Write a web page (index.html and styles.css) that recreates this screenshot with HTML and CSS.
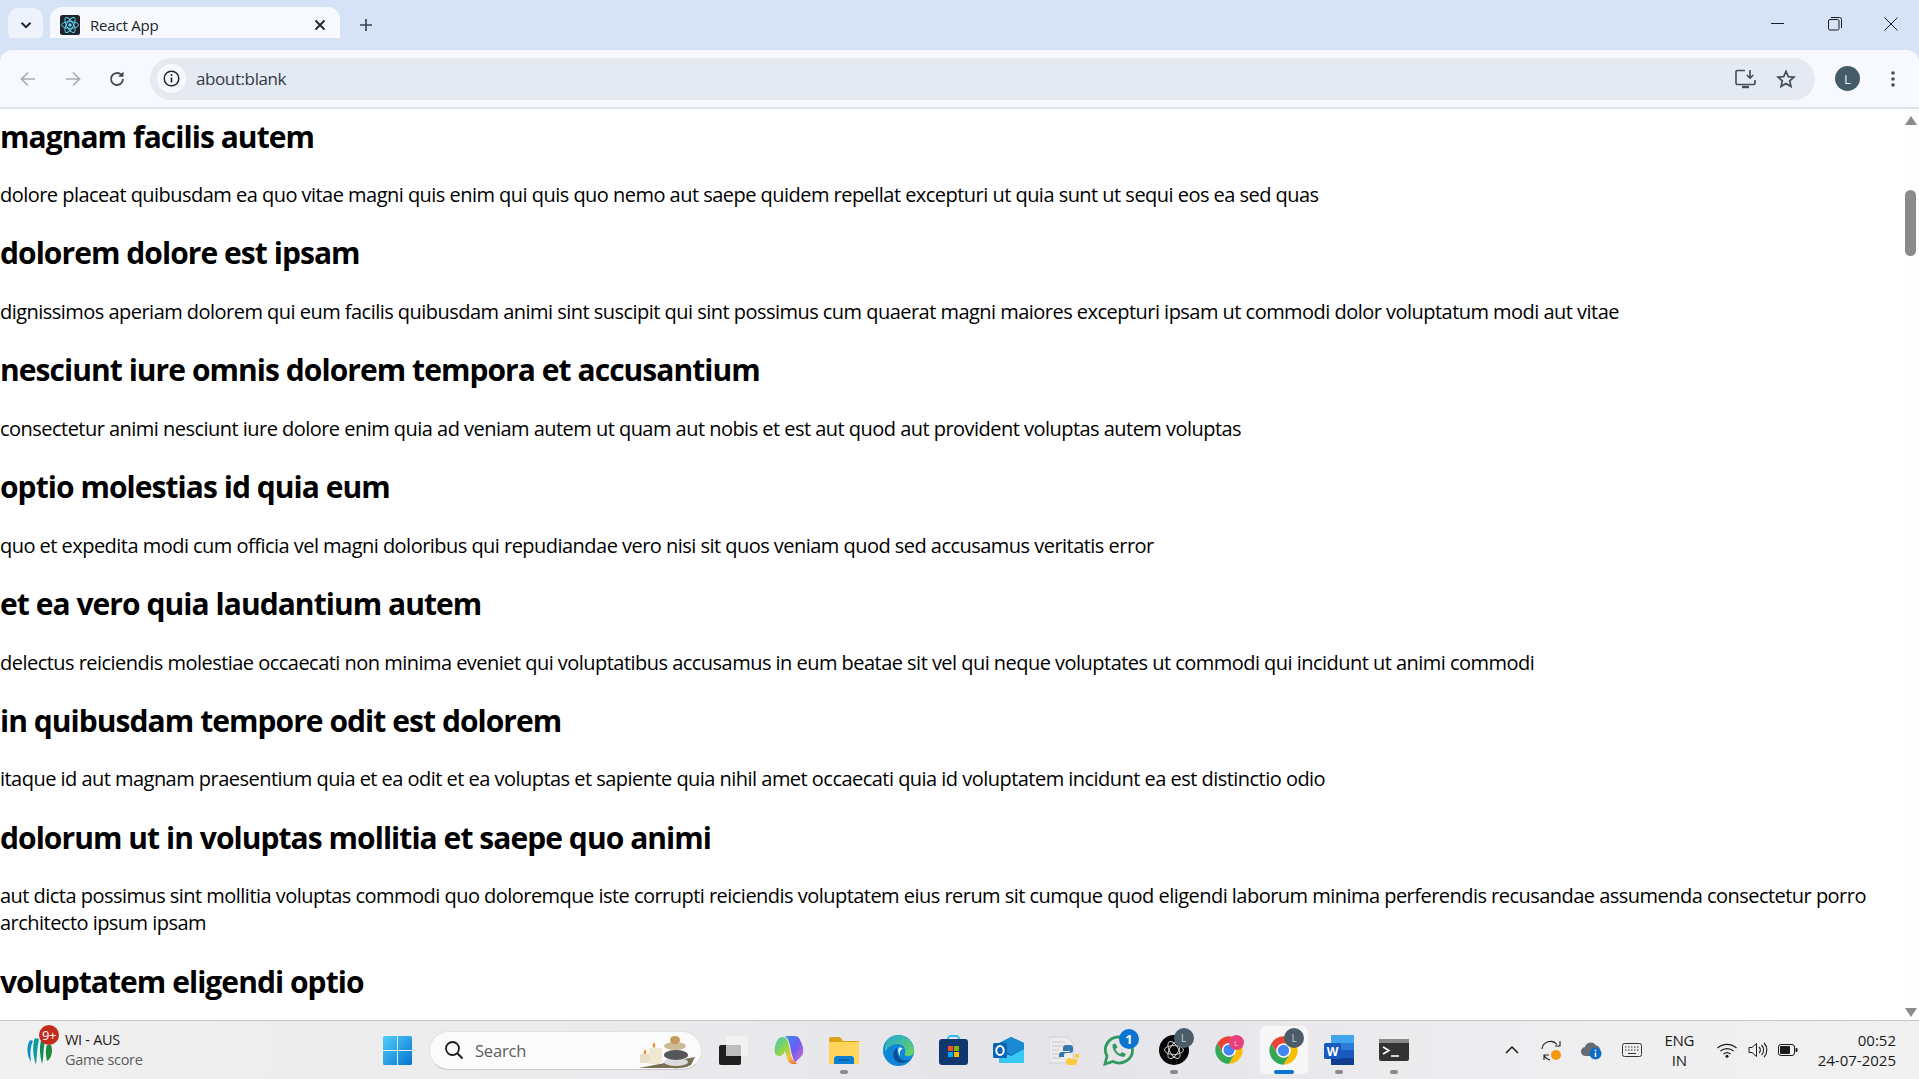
FILE: index.html
```html
<!DOCTYPE html>
<html lang="en">
<head>
<meta charset="utf-8">
<title>React App</title>
<link rel="stylesheet" href="styles.css">
</head>
<body>
<svg class="defs" width="0" height="0">
  <symbol id="chrome" viewBox="0 0 48 48">
    <path fill="#ea4335" d="M43 13H24A11 11 0 0 0 14.5 29.5L5 13A22 22 0 0 1 43 13Z"/>
    <path fill="#fbbc04" d="M43 13H24A11 11 0 0 1 33.5 29.5L24 46A22 22 0 0 0 43 13Z"/>
    <path fill="#34a853" d="M5 13L14.500 29.500A11 11 0 0 0 33.500 29.500L24 46A22 22 0 0 1 5 13Z"/>
    <circle cx="24" cy="24" r="11" fill="#fff"/>
    <circle cx="24" cy="24" r="8.800" fill="#4285f4"/>
  </symbol>
</svg>
<div class="window">
  <header class="tabstrip">
    <button class="tabsearch"><svg width="14" height="14" viewBox="0 0 14 14"><path d="M2.500 4.800L7 9.200L11.500 4.800" fill="none" stroke="#1f2430" stroke-width="2"/></svg></button>
    <div class="tab">
      <svg class="favicon" width="20" height="20" viewBox="0 0 20 20">
        <rect width="20" height="20" rx="2.500" fill="#20232a"/>
        <g fill="none" stroke="#61dafb" stroke-width=".9">
          <ellipse cx="10" cy="10" rx="8.500" ry="3.400"/>
          <ellipse cx="10" cy="10" rx="8.500" ry="3.400" transform="rotate(60 10 10)"/>
          <ellipse cx="10" cy="10" rx="8.500" ry="3.400" transform="rotate(120 10 10)"/>
        </g>
        <circle cx="10" cy="10" r="1.700" fill="#61dafb"/>
      </svg>
      <span class="tabtitle">React App</span>
      <svg class="tabclose" width="12" height="12" viewBox="0 0 12 12"><path d="M1.500 1.500L10.500 10.500M10.500 1.500L1.500 10.500" stroke="#1f2430" stroke-width="1.800"/></svg>
    </div>
    <svg class="newtab" width="14" height="14" viewBox="0 0 14 14"><path d="M7 1V13M1 7H13" stroke="#3c4454" stroke-width="1.700"/></svg>
    <div class="winctrls">
      <svg width="14" height="14" viewBox="0 0 14 14"><path d="M0 6.500H13" stroke="#1b1b1b" stroke-width="1"/></svg>
      <svg width="14" height="14" viewBox="0 0 14 14"><rect x=".5" y="2.500" width="10.500" height="10.500" rx="1.500" fill="none" stroke="#1b1b1b"/><path d="M3 .5H11.500A2 2 0 0 1 13.500 2.500V11" fill="none" stroke="#1b1b1b"/></svg>
      <svg width="14" height="14" viewBox="0 0 14 14"><path d="M.5 .5L13.500 13.500M13.500 .5L.5 13.500" stroke="#1b1b1b" stroke-width="1"/></svg>
    </div>
  </header>
  <nav class="toolbar">
    <svg class="navbtn" width="18" height="18" viewBox="0 0 18 18"><path d="M16 9H2.500M9 2.500L2.500 9L9 15.500" fill="none" stroke="#a9acb3" stroke-width="1.700"/></svg>
    <svg class="navbtn" width="18" height="18" viewBox="0 0 18 18"><path d="M2 9H15.500M9 2.500L15.500 9L9 15.500" fill="none" stroke="#a9acb3" stroke-width="1.700"/></svg>
    <svg class="navbtn" width="18" height="18" viewBox="0 0 18 18"><path d="M15 9A6 6 0 1 1 13.200 4.700" fill="none" stroke="#3f4654" stroke-width="1.800"/><path d="M15.500 1.500V6.800H10.200Z" fill="#3f4654"/></svg>
    <div class="omnibox">
      <span class="infobtn"><svg width="17" height="17" viewBox="0 0 17 17"><circle cx="8.500" cy="8.500" r="7.300" fill="none" stroke="#22262e" stroke-width="1.500"/><path d="M8.500 7.500V12.500" stroke="#22262e" stroke-width="1.700"/><circle cx="8.500" cy="5" r="1" fill="#22262e"/></svg></span>
      <span class="url">about:blank</span>
      <svg class="omniicon" width="21" height="20" viewBox="0 0 21 20"><path d="M10 1.500H2.500A1.500 1.500 0 0 0 1 3V14A1.500 1.500 0 0 0 2.500 15.500H18.500A1.500 1.500 0 0 0 20 14V11" fill="none" stroke="#464c58" stroke-width="1.600"/><path d="M7 18H14" stroke="#464c58" stroke-width="2.400"/><path d="M15 1V9M11.800 6L15 9.200L18.200 6" fill="none" stroke="#464c58" stroke-width="1.600"/></svg>
      <svg class="omniicon star" width="20" height="20" viewBox="0 0 20 20"><path d="M10 2.300L12.300 7.600L18 8.100L13.700 11.900L15 17.500L10 14.500L5 17.500L6.300 11.900L2 8.100L7.700 7.600Z" fill="none" stroke="#464c58" stroke-width="1.700"/></svg>
    </div>
    <span class="avatar">L</span>
    <svg class="kebab" width="6" height="18" viewBox="0 0 6 18"><circle cx="3" cy="3" r="1.800" fill="#464c58"/><circle cx="3" cy="9" r="1.800" fill="#464c58"/><circle cx="3" cy="15" r="1.800" fill="#464c58"/></svg>
  </nav>
  <main class="viewport">
    <article class="page">
      <h2>magnam facilis autem</h2>
      <p>dolore placeat quibusdam ea quo vitae magni quis enim qui quis quo nemo aut saepe quidem repellat excepturi ut quia sunt ut sequi eos ea sed quas</p>
      <h2>dolorem dolore est ipsam</h2>
      <p>dignissimos aperiam dolorem qui eum facilis quibusdam animi sint suscipit qui sint possimus cum quaerat magni maiores excepturi ipsam ut commodi dolor voluptatum modi aut vitae</p>
      <h2>nesciunt iure omnis dolorem tempora et accusantium</h2>
      <p>consectetur animi nesciunt iure dolore enim quia ad veniam autem ut quam aut nobis et est aut quod aut provident voluptas autem voluptas</p>
      <h2>optio molestias id quia eum</h2>
      <p>quo et expedita modi cum officia vel magni doloribus qui repudiandae vero nisi sit quos veniam quod sed accusamus veritatis error</p>
      <h2>et ea vero quia laudantium autem</h2>
      <p>delectus reiciendis molestiae occaecati non minima eveniet qui voluptatibus accusamus in eum beatae sit vel qui neque voluptates ut commodi qui incidunt ut animi commodi</p>
      <h2>in quibusdam tempore odit est dolorem</h2>
      <p>itaque id aut magnam praesentium quia et ea odit et ea voluptas et sapiente quia nihil amet occaecati quia id voluptatem incidunt ea est distinctio odio</p>
      <h2>dolorum ut in voluptas mollitia et saepe quo animi</h2>
      <p>aut dicta possimus sint mollitia voluptas commodi quo doloremque iste corrupti reiciendis voluptatem eius rerum sit cumque quod eligendi laborum minima perferendis recusandae assumenda consectetur porro architecto ipsum ipsam</p>
      <h2>voluptatem eligendi optio</h2>
    </article>
    <div class="scrollbar">
      <span class="arrow up"></span>
      <span class="thumb"></span>
      <span class="arrow down"></span>
    </div>
  </main>
  <footer class="taskbar">
    <div class="widget">
      <span class="widgeticon">
        <svg width="26" height="30" viewBox="0 0 26 30">
          <path d="M3 4C-1 11 0 20 4 26C3 18 3 11 6 5Z" fill="#0b8fc6"/>
          <path d="M8 2C5 10 6 20 9 29C10 20 10 11 12 3Z" fill="#0d9c9c"/>
          <path d="M14 4C12 12 13 20 15 28C17 22 16 12 18 6Z" fill="#138a5e"/>
          <path d="M20 9C18 14 19 20 20 25C25 22 26 14 24 9Z" fill="#1f8a3c"/>
        </svg>
        <span class="redbadge">9+</span>
      </span>
      <span class="widgettext"><b>WI - AUS</b><i>Game score</i></span>
    </div>
    <div class="apps">
      <span class="slot"><svg width="29" height="29" viewBox="0 0 29 29"><defs><linearGradient id="w" x1="0" y1="0" x2="1" y2="1"><stop offset="0" stop-color="#4fd0fb"/><stop offset="1" stop-color="#0673cf"/></linearGradient></defs><path fill="url(#w)" d="M0 1.500A1.500 1.500 0 0 1 1.500 0H14V14H0ZM15 0H27.500A1.500 1.500 0 0 1 29 1.500V14H15ZM0 15H14V29H1.500A1.500 1.500 0 0 1 0 27.500ZM15 15H29V27.500A1.500 1.500 0 0 1 27.500 29H15Z"/></svg></span>
      <div class="search">
        <svg width="20" height="20" viewBox="0 0 20 20"><circle cx="8.500" cy="8.500" r="6.500" fill="none" stroke="#1e1e1e" stroke-width="1.800"/><path d="M13.300 13.300L18.500 18.500" stroke="#1e1e1e" stroke-width="2"/></svg>
        <span class="searchtext">Search</span>
        <svg class="stones" width="60" height="34" viewBox="0 0 60 34">
          <path d="M0 33L56 22L52 30Q44 34 34 33Z" fill="#7b6f55"/>
          <rect x="1" y="19" width="13" height="9" rx="1" fill="#e9dfc6"/>
          <rect x="10" y="13" width="13" height="16" rx="1" fill="#f1e8d2"/>
          <path d="M6 14Q8 17 7 19H5Q4 17 6 14ZM15 7Q17 10 16 12.500H14Q13 10 15 7Z" fill="#ee8a2c"/>
          <ellipse cx="37" cy="27" rx="12" ry="4" fill="#dcdcdc"/>
          <ellipse cx="37" cy="20" rx="12" ry="5" fill="#55565a"/>
          <ellipse cx="36" cy="11" rx="11" ry="4" fill="#cdbb95"/>
          <ellipse cx="36" cy="5" rx="5" ry="4" fill="#c49a5e"/>
        </svg>
      </div>
      <span class="slot"><svg width="31" height="29" viewBox="0 0 31 29"><rect x="1" y="9" width="22" height="20" rx="2" fill="#1f1f1f"/><rect x="8" y="0" width="22" height="20" rx="2" fill="#f3f3f3" opacity=".85"/><rect x="8" y="9" width="15" height="11" fill="#bdbdbd"/></svg></span>
      <span class="slot"><svg width="30" height="28" viewBox="0 0 30 28"><defs><linearGradient id="c1" x1="0" y1="0" x2="1" y2="1"><stop offset="0" stop-color="#3f8ff0"/><stop offset=".5" stop-color="#6a5cf0"/><stop offset="1" stop-color="#e46ad0"/></linearGradient><linearGradient id="c2" x1="0" y1="0" x2="1" y2="1"><stop offset="0" stop-color="#3dc8c0"/><stop offset=".4" stop-color="#8bd64f"/><stop offset=".7" stop-color="#f7c23a"/><stop offset="1" stop-color="#f0503a"/></linearGradient></defs><path fill="url(#c2)" d="M9 1C4 1 2 6 1 11C0 16 1 20 5 20C8 20 10 18 11 15L13 22C14 26 16 28 20 28H24C20 27 18 23 17 19L14 6C13 3 12 1 9 1Z"/><path fill="url(#c1)" d="M11 0H21C23 0 25 1 26 4C28 8 30 12 29 17C28 21 24 23 21 27C19 23 18 19 17 15C16 9 15 3 11 0Z"/></svg></span>
      <span class="slot dot"><svg width="30" height="27" viewBox="0 0 30 27"><path d="M0 2A2 2 0 0 1 2 0H11L14 4H29A1 1 0 0 1 30 5V8H0Z" fill="#dca414"/><path d="M0 5H30V26A1 1 0 0 1 29 27H1A1 1 0 0 1 0 26Z" fill="#ffd55c"/><path d="M5 27V22A3 3 0 0 1 8 19H22A3 3 0 0 1 25 22V27Z" fill="#0a7fd4"/><path d="M10 23H20" stroke="#055a9e" stroke-width="1.500"/></svg></span>
      <span class="slot"><svg width="31" height="31" viewBox="0 0 31 31"><defs><linearGradient id="e1" x1="0" y1="0" x2="1" y2="1"><stop offset="0" stop-color="#1fa9d8"/><stop offset="1" stop-color="#6fd65a"/></linearGradient></defs><circle cx="15.500" cy="15.500" r="15.500" fill="#0f86d8"/><path d="M11 .8C20 -1.500 31 5 31 15.500C31 21 25 22.500 21.500 20C24 15 21 9 14.500 9C9 9 5 12 2 17C1 9 5 2 11 .8Z" fill="url(#e1)"/><path d="M14 13C10 15 9 21 12 25C15 29 22 29 26 25C21 26 18 25 16 22C14 19 14 16 14 13Z" fill="#0b4f94"/><path d="M16 12.500C14.500 15 15 19 17.500 21.500C16 18 17 14.500 20 13.500C19 12.800 17.500 12.300 16 12.500Z" fill="#e8f5fb"/></svg></span>
      <span class="slot"><svg width="29" height="30" viewBox="0 0 29 30"><path d="M9 6V3A3 3 0 0 1 12 1H17A3 3 0 0 1 20 3V6" fill="none" stroke="#2dbcee" stroke-width="1.800"/><rect y="4" width="29" height="26" rx="3" fill="#10386f"/><rect x="9" y="11" width="5" height="5" fill="#f25022"/><rect x="15" y="11" width="5" height="5" fill="#7fba00"/><rect x="9" y="17" width="5" height="5" fill="#00a4ef"/><rect x="15" y="17" width="5" height="5" fill="#ffb900"/></svg></span>
      <span class="slot"><svg width="31" height="26" viewBox="0 0 31 26"><path d="M6 6L18 0L31 6V24A2 2 0 0 1 29 26H8A2 2 0 0 1 6 24Z" fill="#0f6cbd"/><path d="M18 0L31 6V12L18 18L9 12V5Z" fill="#1a8ad4"/><path d="M6 14L18 19L31 12V24A2 2 0 0 1 29 26H8A2 2 0 0 1 6 24Z" fill="#38c9f3"/><rect y="6" width="14" height="15" rx="1.500" fill="#0a63b5"/><ellipse cx="7" cy="13.500" rx="3.700" ry="4.500" fill="none" stroke="#fff" stroke-width="2"/></svg></span>
      <span class="slot"><svg width="30" height="30" viewBox="0 0 30 30"><path d="M0 2H18L24 8V28H0Z" fill="#ececec" stroke="#cfcfcf"/><path d="M3 7H16M3 11H14M3 15H10M3 19H10M3 23H12" stroke="#c6c6c6"/><path d="M21 10H17A3 3 0 0 0 14 13V16H21V17H12A3 3 0 0 0 10 20V22H15V20A2 2 0 0 1 17 18H21A3 3 0 0 0 24 15V13A3 3 0 0 0 21 10Z" fill="#3776ab"/><path d="M21 30H25A3 3 0 0 0 28 27V24H22V23H29A1 1 0 0 0 30 21V19H26V21A2 2 0 0 1 24 23H20A3 3 0 0 0 17 26V27A3 3 0 0 0 21 30Z" fill="#ffcb3d"/></svg></span>
      <span class="slot"><span class="iconwrap"><svg width="31" height="31" viewBox="0 0 31 31"><path d="M2 29L4 21C-1 12 6 2 15.500 2C24 2 29.500 8.500 29.500 15.500C29.500 24.500 19 31 10 26.500Z" fill="none" stroke="#2f9a5c" stroke-width="2.800"/><path d="M10 9C8 13 13 22 21 22L23 19L19 17L17 19C15 18 13 16 12.500 14L14.500 12.500L12.500 8.500Z" fill="#2f9a5c"/></svg><span class="bluebadge">1</span></span></span>
      <span class="slot dot"><span class="iconwrap"><svg width="30" height="30" viewBox="0 0 30 30"><circle cx="15" cy="15" r="15" fill="#060606"/><g fill="none" stroke="#d8d8d8" stroke-width=".9"><ellipse cx="15" cy="15" rx="9.500" ry="4.500"/><ellipse cx="15" cy="15" rx="9.500" ry="4.500" transform="rotate(60 15 15)"/><ellipse cx="15" cy="15" rx="9.500" ry="4.500" transform="rotate(120 15 15)"/></g></svg><span class="greybadge">L</span></span></span>
      <span class="slot"><span class="iconwrap"><svg width="30" height="30"><use href="#chrome"/></svg><span class="pinkbadge">L</span></span></span>
      <span class="slot active"><span class="iconwrap"><svg width="31" height="31"><use href="#chrome"/></svg><span class="greybadge">L</span></span></span>
      <span class="slot dot"><svg width="30" height="30" viewBox="0 0 30 30"><rect x="7" width="23" height="30" rx="2" fill="#2b7cd3"/><rect x="7" width="23" height="8" fill="#41a5ee"/><rect x="7" y="15" width="23" height="8" fill="#185abd"/><rect x="7" y="23" width="23" height="7" fill="#103f91"/><rect y="8" width="17" height="16" rx="1.500" fill="#185abd"/><text class="wordmark" x="8.500" y="20.500">W</text></svg></span>
      <span class="slot dot"><svg width="30" height="22" viewBox="0 0 30 22"><rect width="30" height="22" rx="2" fill="#333"/><rect width="30" height="4" fill="#8a8a8a"/><path d="M4 8L10 11.500L4 15" fill="none" stroke="#fff" stroke-width="1.600"/><path d="M12 17H20" stroke="#fff" stroke-width="1.600"/></svg></span>
    </div>
    <div class="tray">
      <svg class="trayicon chev" width="14" height="10" viewBox="0 0 14 10"><path d="M1 8L7 2L13 8" fill="none" stroke="#1b1b1b" stroke-width="1.500"/></svg>
      <span class="trayicon sync"><svg width="21" height="21" viewBox="0 0 21 21"><path d="M1 9A8.500 8.500 0 0 1 16 4.500M19 1V6H14M3 20V15H8M3 15A8.500 8.500 0 0 0 9 20" fill="none" stroke="#1f1f1f" stroke-width="1.100"/><circle cx="15" cy="15" r="5" fill="#f59a0e"/></svg></span>
      <span class="trayicon cloud"><svg width="21" height="20" viewBox="0 0 21 20"><path d="M5 16A4.500 4.500 0 0 1 4 7A6 6 0 0 1 15 5.500A4 4 0 0 1 18 12V16Z" fill="#676b70"/><circle cx="14.500" cy="13.500" r="6" fill="#0f6cc4"/><path d="M14.500 12.500V17" stroke="#fff" stroke-width="1.500"/><circle cx="14.500" cy="10.300" r=".9" fill="#fff"/></svg></span>
      <svg class="trayicon kbd" width="20" height="14" viewBox="0 0 20 14"><rect x=".5" y=".5" width="19" height="13" rx="2" fill="none" stroke="#333"/><path d="M3 4H17M3 7H17" stroke="#333" stroke-dasharray="1.500 1.500"/><path d="M6 10.500H14" stroke="#333"/></svg>
      <span class="lang">ENG<br>IN</span>
      <svg class="trayicon wifi" width="20" height="15" viewBox="0 0 20 15"><path d="M.5 5A14 14 0 0 1 19.500 5M3.500 8A10 10 0 0 1 16.500 8M6.500 11A5.500 5.500 0 0 1 13.500 11" fill="none" stroke="#1b1b1b" stroke-width="1.200"/><circle cx="10" cy="13.300" r="1.500" fill="#1b1b1b"/></svg>
      <svg class="trayicon vol" width="20" height="16" viewBox="0 0 20 16"><path d="M1 5.500H4L8.500 1.500V14.500L4 10.500H1Z" fill="none" stroke="#1b1b1b" stroke-width="1"/><path d="M11 5A4 4 0 0 1 11 11M13.500 3A7 7 0 0 1 13.500 13M16 1A10 10 0 0 1 16 15" fill="none" stroke="#1b1b1b" stroke-width="1.100"/></svg>
      <svg class="trayicon batt" width="20" height="12" viewBox="0 0 20 12"><rect x=".5" y=".5" width="16" height="11" rx="2.500" fill="none" stroke="#1b1b1b"/><rect x="2" y="2" width="10" height="8" rx="1" fill="#1b1b1b"/><rect x="17.500" y="4" width="2" height="4" rx="1" fill="#1b1b1b"/></svg>
      <span class="clock">00:52<br>24-07-2025</span>
    </div>
  </footer>
</div>
</body>
</html>
```
FILE: styles.css
```css
* { box-sizing: border-box; }
html, body { margin: 0; height: 100%; overflow: hidden; }
body { font-family: "Open Sans", "Noto Sans", sans-serif; color: #000; }
.defs { display: block; height: 0; }
.window { display: flex; flex-direction: column; height: 1079px; }

.tabstrip { height: 50px; flex: none; display: flex; align-items: flex-end; background: #d6e2f5; padding-left: 8px; }
.tabsearch { width: 35px; height: 34px; align-self: flex-start; margin-top: 8px; border: 0; padding: 0; border-radius: 10px; background: #edf2fb; display: flex; align-items: center; justify-content: center; }
.tab { position: relative; width: 290px; height: 43px; margin-left: 7px; background: #f8f9fe; border-radius: 12px 12px 0 0; display: flex; align-items: center; padding: 0 14px 7px 10px; }
.tab::before, .tab::after { content: ""; position: absolute; bottom: 0; width: 12px; height: 12px; }
.tab::before { left: -12px; background: radial-gradient(circle at 0 0, transparent 12px, #f8f9fe 12.500px); }
.tab::after { right: -12px; background: radial-gradient(circle at 100% 0, transparent 12px, #f8f9fe 12.500px); }
.favicon { flex: none; }
.tabtitle { margin-left: 10px; font-size: 15px; letter-spacing: -.2px; color: #20242c; flex: 1; }
.tabclose { flex: none; }
.newtab { align-self: flex-start; margin: 18px 0 0 19px; }
.winctrls { margin-left: auto; align-self: flex-start; display: flex; gap: 42.500px; padding: 17px 21px 0 0; }

.toolbar { height: 59px; flex: none; display: flex; align-items: center; padding: 0 0 0 19px; background: #f8f9fe; border-bottom: 2px solid #dfe3ec; border-radius: 12px 12px 0 0; box-shadow: 0 -12px 0 #d6e2f5; position: relative; }
.navbtn { flex: none; margin-right: 27px; }
.navbtn:nth-of-type(2) { margin-right: 26px; }
.navbtn:nth-of-type(3) { margin-right: 24px; }
.omnibox { width: 1665px; height: 42px; border-radius: 21px; background: #e5e9f2; display: flex; align-items: center; padding: 0 19px 0 7px; }
.infobtn { width: 29px; height: 29px; border-radius: 50%; background: #f8f9fe; display: flex; align-items: center; justify-content: center; }
.url { margin-left: 10px; font-size: 17px; letter-spacing: -.4px; color: #333944; flex: 1; }
.omniicon { flex: none; }
.star { margin-left: 20px; }
.avatar { width: 25px; height: 25px; margin-left: 20px; border-radius: 50%; background: #455c68; color: #e6ecef; font-size: 13px; display: flex; align-items: center; justify-content: center; flex: none; }
.kebab { margin-left: 30px; flex: none; }

.viewport { flex: 1; min-height: 0; display: flex; overflow: hidden; background: #fff; }
.page { flex: 1; min-width: 0; padding-top: 7.500px; }
.page h2 { margin: 0 0 24.500px; font-size: 30px; line-height: 40px; font-weight: 700; letter-spacing: -.95px; }
.page p { margin: 0 0 25.400px; font-size: 20px; line-height: 27px; letter-spacing: -.53px; }

.scrollbar { width: 15px; flex: none; background: #fdfdfd; display: flex; flex-direction: column; align-items: center; padding: 7px 2px 3px 0; }
.arrow { width: 0; height: 0; border-left: 6.500px solid transparent; border-right: 6.500px solid transparent; }
.up { border-bottom: 9px solid #8b8b8b; }
.down { border-top: 9px solid #8b8b8b; margin-top: auto; }
.thumb { width: 11px; height: 66px; margin-top: 65px; border-radius: 6px; background: #8b8b8b; }

.taskbar { height: 59px; flex: none; display: flex; align-items: center; border-top: 1px solid #c6c6c6; background: linear-gradient(90deg, #f1f1f1 0%, #eceaec 30%, #e4e4e9 55%, #eeeef0 80%, #f1f1f1 100%); }
.widget { width: 370px; flex: none; display: flex; align-items: center; padding-left: 27px; }
.widgeticon { position: relative; width: 26px; height: 30px; margin-top: 2px; }
.redbadge { position: absolute; top: -11px; left: 12px; width: 20px; height: 20px; border-radius: 50%; background: #c42b1c; color: #fff; font-size: 13px; line-height: 20px; text-align: center; letter-spacing: -.5px; }
.widgettext { margin-left: 12px; display: flex; flex-direction: column; font-size: 14.500px; line-height: 20px; letter-spacing: -.3px; }
.widgettext b { font-weight: 400; color: #1a1a1a; }
.widgettext i { font-style: normal; color: #5c5c5c; }

.apps { display: flex; align-items: center; margin-left: -1px; }
.slot { position: relative; width: 55px; height: 48px; display: flex; align-items: center; justify-content: center; flex: none; }
.slot:first-child { width: 30px; margin-left: 13px; margin-right: 17px; }
.iconwrap { position: relative; display: flex; }
.dot::after { content: ""; position: absolute; bottom: 0; left: 50%; width: 8px; height: 4px; margin-left: -4px; border-radius: 2px; background: #8a8a8a; }
.active { background: #f7f7f8; border-radius: 6px; box-shadow: 0 0 0 1px #ebebeb; width: 48px; margin: 0 3.500px; }
.active::after { content: ""; position: absolute; bottom: 0; left: 50%; width: 20px; height: 4px; margin-left: -10px; border-radius: 2px; background: #0a74d1; }
.bluebadge, .greybadge, .pinkbadge { position: absolute; border-radius: 50%; color: #fff; display: flex; align-items: center; justify-content: center; }
.bluebadge { top: -6px; right: -5px; width: 20px; height: 20px; background: #0a74d1; font-size: 13px; font-weight: 700; }
.greybadge { top: -7px; right: -5px; width: 20px; height: 20px; background: #4d5c69; color: #c6cdd3; font-size: 10px; }
.pinkbadge { top: 0; right: 0; width: 15px; height: 15px; background: #e6407f; color: #f7c9dc; font-size: 8px; }
.wordmark { font-size: 12px; font-weight: 700; fill: #fff; font-family: "Open Sans", sans-serif; text-anchor: middle; }

.search { width: 273px; height: 39px; margin-right: 4px; border-radius: 20px; background: #fbfbfb; border: 1px solid #e2e2e2; border-bottom-color: #c9c9c9; display: flex; align-items: center; padding: 0 2px 0 14px; }
.searchtext { margin-left: 11px; font-size: 16.500px; letter-spacing: -.2px; color: #5d5d5d; flex: 1; }
.stones { flex: none; margin-bottom: -3px; }

.tray { margin-left: auto; display: flex; align-items: center; height: 100%; padding-right: 23px; }
.trayicon { flex: none; }
.chev { margin-right: 22px; }
.sync { margin-right: 19px; display: flex; }
.cloud { margin-right: 20px; display: flex; }
.kbd { margin-right: 10px; }
.lang { width: 54px; text-align: center; font-size: 15px; line-height: 20px; letter-spacing: -.3px; color: #1b1b1b; margin-right: 11px; }
.wifi { margin-right: 11px; }
.vol { margin-right: 10px; }
.batt { margin-right: 19.500px; }
.clock { text-align: right; font-size: 15px; line-height: 20px; color: #1b1b1b; }
```
